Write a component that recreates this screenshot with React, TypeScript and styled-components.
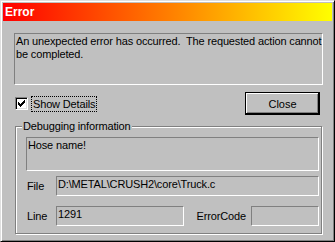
import React, { FC } from "react";
import styled, { createGlobalStyle } from "styled-components";

const GlobalStyle = createGlobalStyle`
  body {
    margin: 0;
    font-family: "Liberation Sans", Arial, sans-serif;
    font-size: 11px;
    letter-spacing: -0.15px;
    color: #000;
    background: #c0c0c0;
  }
  * {
    box-sizing: border-box;
  }
`;

interface FieldProps {
  $width?: number;
}

const CheckMark: FC = () => (
  <svg width="7" height="7" viewBox="0 0 7 7" shapeRendering="crispEdges">
    <path
      d="M6 0h1v1h-1z M5 1h2v1h-2z M0 2h1v1h-1z M4 2h3v1h-3z M0 3h2v1h-2z M3 3h3v1h-3z M0 4h5v1h-5z M1 5h3v1h-3z M2 6h1v1h-1z"
      fill="#000"
    />
  </svg>
);

export default function App() {
  return (
    <>
      <GlobalStyle />
      <Window>
        <TitleBar>Error</TitleBar>
        <Body>
          <MessageBox>
            {"An unexpected error has occurred.  The requested action cannot\nbe completed."}
          </MessageBox>
          <ControlRow>
            <CheckLabel>
              <CheckBox>
                <CheckMark />
              </CheckBox>
              <FocusText>Show Details</FocusText>
            </CheckLabel>
            <DefaultButton>Close</DefaultButton>
          </ControlRow>
          <GroupBox>
            <Legend>Debugging information</Legend>
            <HoseBox>Hose name!</HoseBox>
            <FieldRow $gap={5}>
              <FieldLabel>File</FieldLabel>
              <Field>D:\METAL\CRUSH2\core\Truck.c</Field>
            </FieldRow>
            <FieldRow $gap={10}>
              <FieldLabel>Line</FieldLabel>
              <Field $width={128}>1291</Field>
              <CodeLabel>ErrorCode</CodeLabel>
              <Field $width={68} />
            </FieldRow>
          </GroupBox>
        </Body>
      </Window>
    </>
  );
}

const Window = styled.div`
  width: 335px;
  height: 242px;
  display: flex;
  flex-direction: column;
  padding: 2px;
  background: #c0c0c0;
  border: 1px solid;
  border-color: #dfdfdf #000 #000 #dfdfdf;
  box-shadow: inset 1px 1px #fff, inset -1px -1px #808080;
`;

const TitleBar = styled.div`
  height: 18px;
  display: flex;
  align-items: center;
  padding-left: 2px;
  background: linear-gradient(to right, #ff0000, #ff8a00 55%, #ffff00);
  color: #fff;
  font-weight: bold;
  font-size: 12px;
  letter-spacing: 0;
`;

const Body = styled.div`
  display: flex;
  flex-direction: column;
  padding: 12px 0 0 11px;
`;

const MessageBox = styled.div`
  width: 309px;
  height: 52px;
  padding: 1px 1px 0;
  border: 1px solid;
  border-color: #808080 #fff #fff #808080;
  line-height: 13px;
  white-space: pre;
  overflow: hidden;
`;

const ControlRow = styled.div`
  width: 309px;
  height: 23px;
  margin-top: 7px;
  padding: 0 3px 0 1px;
  display: flex;
  align-items: center;
  justify-content: space-between;
`;

const CheckLabel = styled.div`
  display: flex;
  align-items: center;
  gap: 3px;
`;

const CheckBox = styled.div`
  width: 13px;
  height: 13px;
  display: flex;
  align-items: center;
  justify-content: center;
  background: #fff;
  border: 1px solid;
  border-color: #808080 #fff #fff #808080;
  box-shadow: inset 1px 1px #000, inset -1px -1px #dfdfdf;
`;

const FocusText = styled.span`
  height: 16px;
  padding: 0 1px;
  line-height: 14px;
  border: 1px dotted #000;
`;

const DefaultButton = styled.button`
  width: 75px;
  height: 23px;
  padding: 0;
  font: inherit;
  color: #000;
  background: #c0c0c0;
  border: 1px solid #000;
  box-shadow: inset -1px -1px #000, inset 1px 1px #fff, inset -2px -2px #808080;
`;

const GroupBox = styled.div`
  position: relative;
  width: 307px;
  height: 108px;
  margin: 11px 0 0 1px;
  padding: 10px 2px 0 10px;
  display: flex;
  flex-direction: column;
  border: 1px solid #808080;
  box-shadow: inset 1px 1px #fff, 1px 1px #fff;
`;

const Legend = styled.span`
  position: absolute;
  top: -7px;
  left: 6px;
  padding: 0 1px;
  line-height: 13px;
  background: #c0c0c0;
`;

const HoseBox = styled.div`
  height: 34px;
  padding: 1px 1px 0;
  line-height: 13px;
  border: 1px solid;
  border-color: #808080 #fff #fff #808080;
`;

const FieldRow = styled.div<{ $gap: number }>`
  height: 20px;
  margin-top: ${(p) => p.$gap}px;
  display: flex;
  align-items: center;
`;

const FieldLabel = styled.span`
  width: 30px;
  padding-left: 1px;
`;

const CodeLabel = styled.span`
  margin-left: auto;
  margin-right: 5px;
`;

const Field = styled.div<FieldProps>`
  ${(p) => (p.$width ? `width: ${p.$width}px;` : "flex: 1;")}
  height: 20px;
  padding: 1px 1px 0;
  line-height: 13px;
  border: 1px solid;
  border-color: #808080 #fff #fff #808080;
  white-space: nowrap;
  overflow: hidden;
`;
